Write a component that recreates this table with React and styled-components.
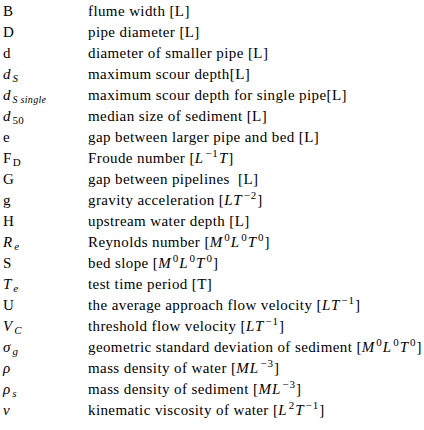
import React from 'react'
import styled, { createGlobalStyle } from 'styled-components'

const Global = createGlobalStyle`
  body {
    margin: 0;
    background: #fff;
    color: #000;
    font-family: "Liberation Serif", "Times New Roman", serif;
  }
`

const Table = styled.div`
  display: grid;
  grid-template-columns: 85px 1fr;
  padding: 1px 0 0 3px;
  font-size: 15px;
  line-height: 21px;
  letter-spacing: 0.4px;
  width: 424px;
  box-sizing: border-box;
`

const Cell = styled.div`
  height: 21px;
  white-space: pre;
`

const M = styled.i`
  font-style: italic;
  letter-spacing: 1px;
  font-family: "Liberation Serif", serif;
`

const Sub = styled.sub`
  font-size: ${p => (p.$small ? '10px' : '11px')};
  letter-spacing: 0.3px;
  line-height: 0;
  vertical-align: -3px;
  margin-left: 1px;
  font-style: ${p => (p.$up ? 'normal' : 'italic')};
`

const Sup = styled.sup`
  font-size: 11px;
  line-height: 0;
  vertical-align: 6px;
  font-style: normal;
  margin-left: 1px;
`

const rows = [
  ['B', 'flume width [L]'],
  ['D', 'pipe diameter [L]'],
  ['d', 'diameter of smaller pipe [L]'],
  [<M>d<Sub>S</Sub></M>, 'maximum scour depth[L]'],
  [<M>d<Sub $small>S single</Sub></M>, 'maximum scour depth for single pipe[L]'],
  [<M>d<Sub $up>50</Sub></M>, 'median size of sediment [L]'],
  ['e', 'gap between larger pipe and bed [L]'],
  [<>F<Sub $up>D</Sub></>, <>Froude number [<M>L<Sup>−1</Sup>T</M>]</>],
  ['G', 'gap between pipelines  [L]'],
  ['g', <>gravity acceleration [<M>LT<Sup>−2</Sup></M>]</>],
  ['H', 'upstream water depth [L]'],
  [<M>R<Sub>e</Sub></M>, <>Reynolds number [<M>M<Sup>0</Sup>L<Sup>0</Sup>T<Sup>0</Sup></M>]</>],
  ['S', <>bed slope [<M>M<Sup>0</Sup>L<Sup>0</Sup>T<Sup>0</Sup></M>]</>],
  [<M>T<Sub>e</Sub></M>, 'test time period [T]'],
  ['U', <>the average approach flow velocity [<M>LT<Sup>−1</Sup></M>]</>],
  [<M>V<Sub>C</Sub></M>, <>threshold flow velocity [<M>LT<Sup>−1</Sup></M>]</>],
  [<M>σ<Sub>g</Sub></M>, <>geometric standard deviation of sediment [<M>M<Sup>0</Sup>L<Sup>0</Sup>T<Sup>0</Sup></M>]</>],
  [<M>ρ</M>, <>mass density of water [<M>ML<Sup>−3</Sup></M>]</>],
  [<M>ρ<Sub>s</Sub></M>, <>mass density of sediment [<M>ML<Sup>−3</Sup></M>]</>],
  [<M>ν</M>, <>kinematic viscosity of water [<M>L<Sup>2</Sup>T<Sup>−1</Sup></M>]</>],
]

export default function App() {
  return (
    <>
      <Global />
      <Table>
        {rows.map(([sym, desc], i) => (
          <React.Fragment key={i}>
            <Cell>{sym}</Cell>
            <Cell>{desc}</Cell>
          </React.Fragment>
        ))}
      </Table>
    </>
  )
}
